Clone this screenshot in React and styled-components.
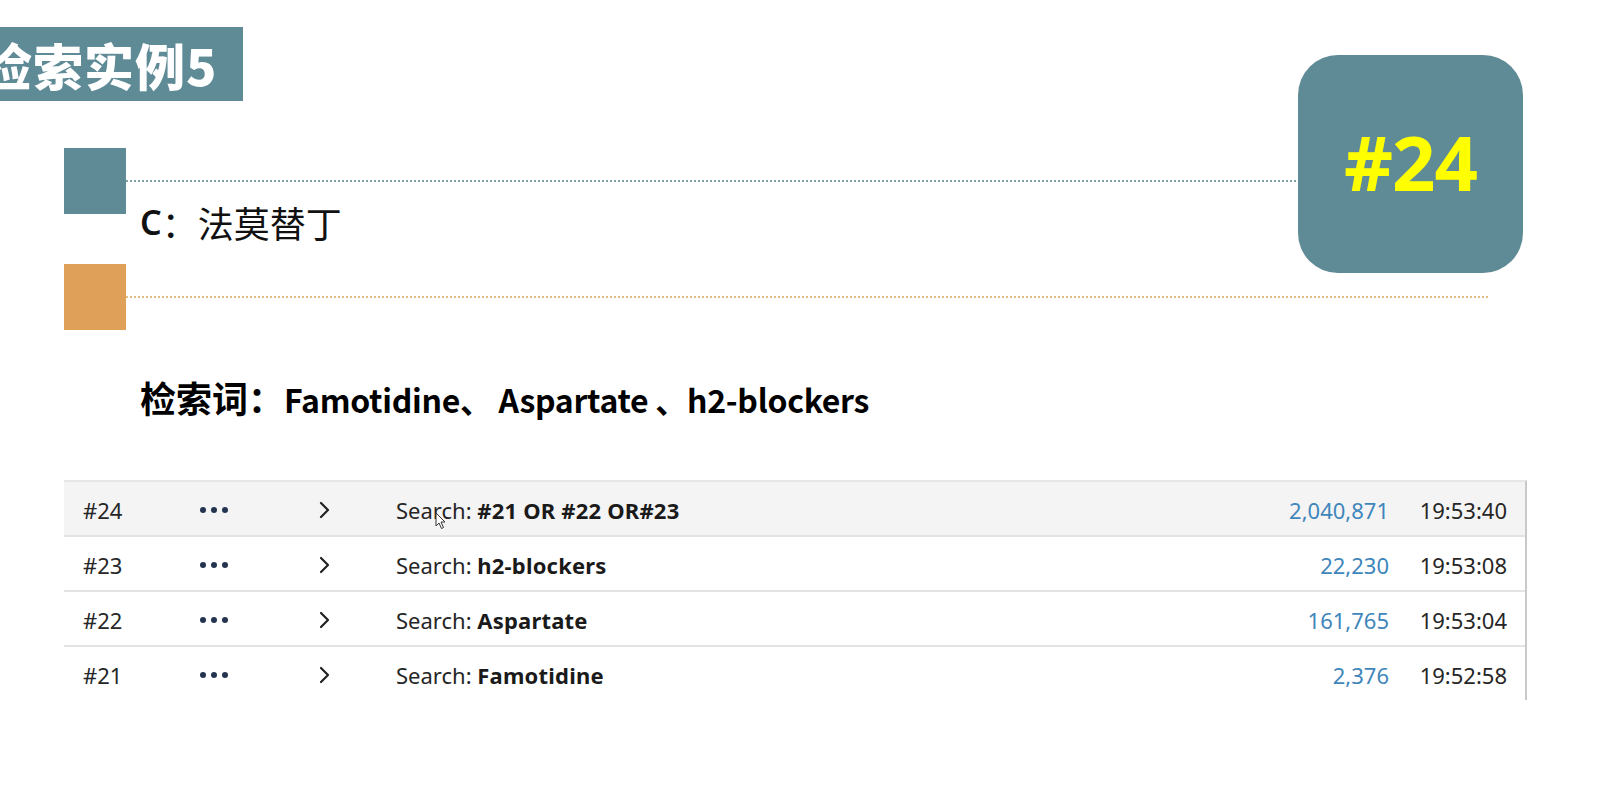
import React from 'react'
import styled, { createGlobalStyle } from 'styled-components'

const GlobalStyle = createGlobalStyle`
    html, body {
        margin: 0;
        padding: 0;
        background: #ffffff;
    }
    body {
        font-family: "Noto Sans", "Noto Sans CJK SC", sans-serif;
    }
`

const TEAL = '#5f8b96'
const ORANGE = '#dfa159'

const Page = styled.div`
    position: relative;
    width: 1603px;
    height: 808px;
    overflow: hidden;
    background: #fff;
`

const TitleTag = styled.div`
    margin-top: 27px;
    width: 243px;
    height: 74px;
    background: ${TEAL};
    display: flex;
    align-items: center;
    overflow: hidden;
`

const TitleText = styled.span`
    margin-left: -18px;
    color: #fff;
    font-family: "Noto Sans CJK SC", sans-serif;
    font-weight: 900;
    font-size: 50px;
    line-height: 1;
    white-space: nowrap;
    letter-spacing: 1px;
`

const Markers = styled.div`
    margin-top: 47px;
    padding-left: 64px;
    display: flex;
    flex-direction: column;
`

const MarkerRow = styled.div`
    display: flex;
    align-items: center;
    height: 66px;
`

const Square = styled.div`
    width: 62px;
    height: 66px;
    background: ${p => p.$color};
    flex-shrink: 0;
`

const Dotted = styled.div`
    width: ${p => p.$width}px;
    height: 2px;
    background-image: repeating-linear-gradient(
        to right,
        ${p => p.$color} 0 2px,
        transparent 2px 4px
    );
    opacity: 0.8;
`

const Subtitle = styled.div`
    height: 50px;
    margin-left: 76px;
    margin-top: -17px;
    margin-bottom: 17px;
    display: flex;
    align-items: center;
    font-family: "Noto Sans CJK SC", sans-serif;
    font-size: 36px;
    color: #111;
    white-space: nowrap;
`

const Letter = styled.span`
    font-family: "Noto Sans", sans-serif;
    font-weight: 600;
    font-size: 34px;
`

const Keywords = styled.div`
    margin-top: 47px;
    margin-left: 140px;
    font-family: "Noto Sans CJK SC", sans-serif;
    font-weight: 700;
    font-size: 36px;
    color: #000;
    white-space: nowrap;
    line-height: 40px;
`

const KeywordTerms = styled.span`
    font-size: 32px;
    letter-spacing: -0.3px;
`

const Badge = styled.div`
    position: absolute;
    left: 1298px;
    top: 55px;
    width: 225px;
    height: 218px;
    border-radius: 40px;
    background: ${TEAL};
    display: flex;
    align-items: center;
    justify-content: center;
    color: #ffff00;
    font-family: "Noto Sans", sans-serif;
    font-weight: 700;
    font-size: 76px;
    padding-bottom: 6px;
    box-sizing: border-box;
    letter-spacing: -1px;
`

const Table = styled.div`
    margin-top: 61px;
    margin-left: 64px;
    width: 1463px;
    border-top: 2px solid #e6e6e6;
    border-right: 2px solid #c9c9c9;
    box-sizing: border-box;
`

const Row = styled.div`
    position: relative;
    display: grid;
    grid-template-columns: 117px 118px 78px 1fr auto 118px;
    align-items: center;
    height: 51px;
    padding-left: 19px;
    padding-right: 18px;
    padding-top: 2px;
    background: ${p => (p.$active ? '#f4f4f4' : '#fff')};
    border-bottom: ${p => (p.$last ? 'none' : '2px solid #e3e3e3')};
    font-family: "Noto Sans", sans-serif;
    font-size: 22px;
    color: #262626;
`

const Num = styled.span``

const Dots = styled.span`
    display: flex;
    gap: 5px;
    & > i {
        width: 6px;
        height: 6px;
        border-radius: 50%;
        background: #243450;
        display: block;
    }
`

const Query = styled.span`
    & > b {
        font-weight: 700;
        color: #1a1a1a;
        letter-spacing: 0.2px;
    }
`

const Count = styled.span`
    color: #3f86bb;
    text-align: right;
`

const Time = styled.span`
    text-align: right;
`

const Cursor = styled.svg`
    position: absolute;
    left: 371px;
    top: 30px;
`

const Chevron = () => (
    <svg width="14" height="20" viewBox="0 0 14 20">
        <path d="M3 3 L10 10 L3 17" fill="none" stroke="#222" strokeWidth="2.2" strokeLinecap="round" strokeLinejoin="round" />
    </svg>
)

const rows = [
    { id: '#24', term: '#21 OR #22 OR#23', count: '2,040,871', time: '19:53:40' },
    { id: '#23', term: 'h2-blockers', count: '22,230', time: '19:53:08' },
    { id: '#22', term: 'Aspartate', count: '161,765', time: '19:53:04' },
    { id: '#21', term: 'Famotidine', count: '2,376', time: '19:52:58' },
]

export default function App() {
    return (
        <Page>
            <GlobalStyle />
            <TitleTag>
                <TitleText>检索实例5</TitleText>
            </TitleTag>

            <Markers>
                <MarkerRow>
                    <Square $color={TEAL} />
                    <Dotted $color={TEAL} $width={1172} />
                </MarkerRow>
                <Subtitle><Letter>C</Letter>：法莫替丁</Subtitle>
                <MarkerRow>
                    <Square $color={ORANGE} />
                    <Dotted $color="#e2a865" $width={1362} />
                </MarkerRow>
            </Markers>

            <Keywords>
                检索词：<KeywordTerms>Famotidine、 Aspartate 、h2-blockers</KeywordTerms>
            </Keywords>

            <Badge>#24</Badge>

            <Table>
                {rows.map((r, i) => (
                    <Row key={r.id} $active={i === 0} $last={i === rows.length - 1}>
                        <Num>{r.id}</Num>
                        <Dots><i /><i /><i /></Dots>
                        <Chevron />
                        <Query>Search: <b>{r.term}</b></Query>
                        <Count>{r.count}</Count>
                        <Time>{r.time}</Time>
                        {i === 0 && (
                            <Cursor width="12" height="18" viewBox="0 0 12 18">
                                <path d="M1 1 L1 14 L4 11 L6.5 16.5 L8.5 15.5 L6 10 L10 10 Z" fill="#fff" stroke="#333" strokeWidth="1" strokeLinejoin="round" />
                            </Cursor>
                        )}
                    </Row>
                ))}
            </Table>
        </Page>
    )
}
